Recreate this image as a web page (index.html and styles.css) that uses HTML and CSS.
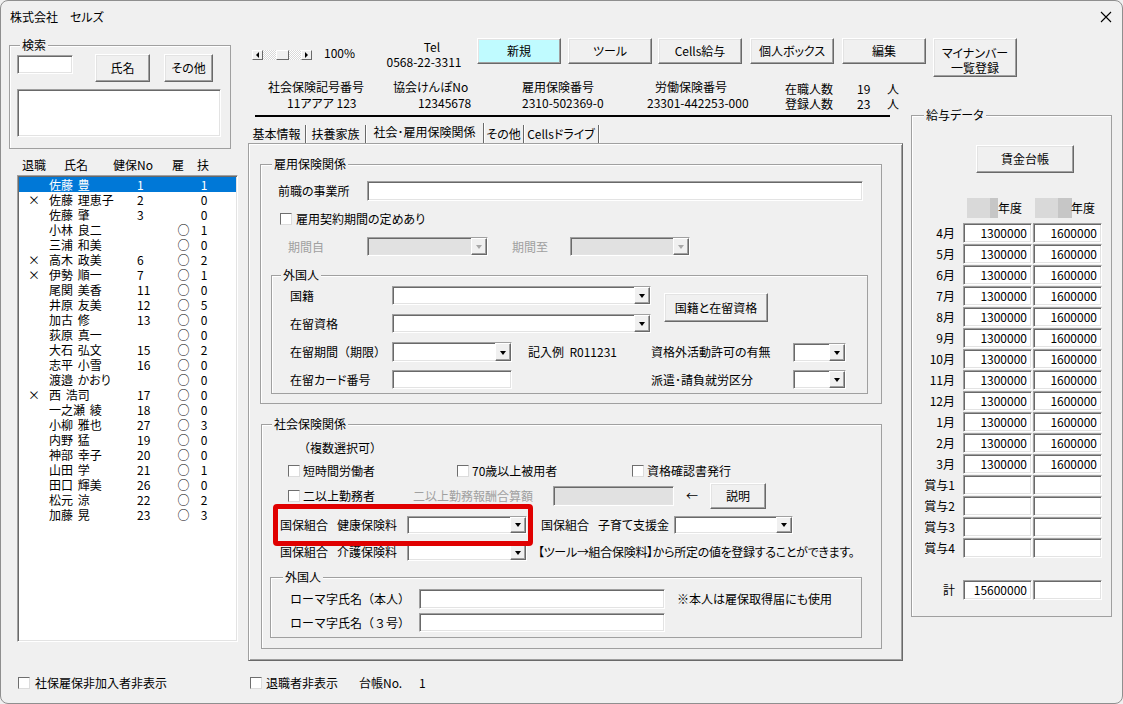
FILE: index.html
```html
<!DOCTYPE html>
<html lang="ja">
<head>
<meta charset="utf-8">
<title>株式会社　セルズ</title>
<link rel="stylesheet" href="styles.css">
</head>
<body>
<div class="window">
  <div class="titlebar">
    <span class="title">株式会社　セルズ</span>
    <svg class="close" width="12" height="12" viewBox="0 0 12 12"><path d="M1 1L11 11M11 1L1 11" stroke="#000" stroke-width="1.1" fill="none"/></svg>
  </div>
  <div class="main">
    <div class="left">
      <div class="frame search">
        <span class="legend lg-search">検索</span>
        <div class="search-row">
          <div class="field search-input"></div>
          <div class="btn btn-name">氏名</div>
          <div class="btn btn-other">その他</div>
        </div>
        <div class="field search-result"></div>
      </div>
      <div class="list-head">
        <span class="lh1">退職</span><span class="lh2">氏名</span><span class="lh3">健保No</span><span class="lh4">雇</span><span class="lh5">扶</span>
      </div>
      <div class="field listbox">
        <div class="lrow sel"><span class="c"></span><span>佐藤 豊</span><span>1</span><span class="c"></span><span class="c">1</span></div>
        <div class="lrow"><span class="c">×</span><span>佐藤 理恵子</span><span>2</span><span class="c"></span><span class="c">0</span></div>
        <div class="lrow"><span class="c"></span><span>佐藤 肇</span><span>3</span><span class="c"></span><span class="c">0</span></div>
        <div class="lrow"><span class="c"></span><span>小林 良二</span><span></span><span class="c">○</span><span class="c">1</span></div>
        <div class="lrow"><span class="c"></span><span>三浦 和美</span><span></span><span class="c">○</span><span class="c">0</span></div>
        <div class="lrow"><span class="c">×</span><span>高木 政美</span><span>6</span><span class="c">○</span><span class="c">2</span></div>
        <div class="lrow"><span class="c">×</span><span>伊勢 順一</span><span>7</span><span class="c">○</span><span class="c">1</span></div>
        <div class="lrow"><span class="c"></span><span>尾関 美香</span><span>11</span><span class="c">○</span><span class="c">0</span></div>
        <div class="lrow"><span class="c"></span><span>井原 友美</span><span>12</span><span class="c">○</span><span class="c">5</span></div>
        <div class="lrow"><span class="c"></span><span>加古 修</span><span>13</span><span class="c">○</span><span class="c">0</span></div>
        <div class="lrow"><span class="c"></span><span>荻原 真一</span><span></span><span class="c">○</span><span class="c">0</span></div>
        <div class="lrow"><span class="c"></span><span>大石 弘文</span><span>15</span><span class="c">○</span><span class="c">2</span></div>
        <div class="lrow"><span class="c"></span><span>志平 小雪</span><span>16</span><span class="c">○</span><span class="c">0</span></div>
        <div class="lrow"><span class="c"></span><span>渡邉 かおり</span><span></span><span class="c">○</span><span class="c">0</span></div>
        <div class="lrow"><span class="c">×</span><span>西 浩司</span><span>17</span><span class="c">○</span><span class="c">0</span></div>
        <div class="lrow"><span class="c"></span><span>一之瀬 綾</span><span>18</span><span class="c">○</span><span class="c">0</span></div>
        <div class="lrow"><span class="c"></span><span>小柳 雅也</span><span>27</span><span class="c">○</span><span class="c">3</span></div>
        <div class="lrow"><span class="c"></span><span>内野 猛</span><span>19</span><span class="c">○</span><span class="c">0</span></div>
        <div class="lrow"><span class="c"></span><span>神部 幸子</span><span>20</span><span class="c">○</span><span class="c">0</span></div>
        <div class="lrow"><span class="c"></span><span>山田 学</span><span>21</span><span class="c">○</span><span class="c">1</span></div>
        <div class="lrow"><span class="c"></span><span>田口 輝美</span><span>26</span><span class="c">○</span><span class="c">0</span></div>
        <div class="lrow"><span class="c"></span><span>松元 涼</span><span>22</span><span class="c">○</span><span class="c">2</span></div>
        <div class="lrow"><span class="c"></span><span>加藤 晃</span><span>23</span><span class="c">○</span><span class="c">3</span></div>
      </div>
      <div class="left-chk"><span class="chk"></span><span class="chk-lab">社保雇保非加入者非表示</span></div>
    </div>

    <div class="right-area">
      <div class="toolbar">
        <div class="hscroll">
          <div class="sb-btn"><span class="tri-l"></span></div>
          <div class="sb-track"><div class="sb-thumb"></div></div>
          <div class="sb-btn"><span class="tri-r"></span></div>
        </div>
        <div class="pct">100%</div>
        <div class="tel"><div class="tel-label">Tel</div><div>0568-22-3311</div></div>
        <div class="btn tb-btn b-new">新規</div>
        <div class="btn tb-btn b-tool">ツール</div>
        <div class="btn tb-btn b-cells">Cells給与</div>
        <div class="btn tb-btn b-box">個人ボックス</div>
        <div class="btn tb-btn b-edit">編集</div>
        <div class="btn tb-btn b-my"><span>マイナンバー<br>一覧登録</span></div>
      </div>

      <div class="lower">
        <div class="center">
          <div class="info">
            <div class="ig ig1"><span class="l">社会保険記号番号</span><span class="v">11アアア 123</span></div>
            <div class="ig ig2"><span class="l">協会けんぽNo</span><span class="v">12345678</span></div>
            <div class="ig ig3"><span class="l">雇用保険番号</span><span class="v">2310-502369-0</span></div>
            <div class="ig ig4"><span class="l">労働保険番号</span><span class="v">23301-442253-000</span></div>
            <div class="counts">
              <div class="cnt-row"><span class="cnt-l">在職人数</span><span class="cnt-n">19</span><span>人</span></div>
              <div class="cnt-row"><span class="cnt-l">登録人数</span><span class="cnt-n">23</span><span>人</span></div>
            </div>
          </div>

          <div class="tabs">
            <div class="tab t1">基本情報</div>
            <div class="tab t2">扶養家族</div>
            <div class="tab t3 active">社会･雇用保険関係</div>
            <div class="tab t4">その他</div>
            <div class="tab t5">Cellsドライブ</div>
          </div>

          <div class="tabpage">
            <div class="frame f-koyo">
              <span class="legend lg-koyo">雇用保険関係</span>
              <div class="r-zen">
                <span class="lab-zen">前職の事業所</span>
                <div class="field in-zen"></div>
              </div>
              <div class="r-chk"><span class="chk"></span><span class="chk-lab">雇用契約期間の定めあり</span></div>
              <div class="r-kikan">
                <span class="lab-k1 gray">期間自</span>
                <div class="field combo dis cb-k1"><span class="dd"></span></div>
                <span class="lab-k2 gray">期間至</span>
                <div class="field combo dis cb-k2"><span class="dd"></span></div>
              </div>

              <div class="frame f-gai1">
                <span class="legend lg-gai1">外国人</span>
                <div class="g-top">
                  <div class="g-top-left">
                    <div class="g-row g-rowA"><span class="g-lab">国籍</span><div class="field combo cb-wide"><span class="dd"></span></div></div>
                    <div class="g-row g-rowB"><span class="g-lab">在留資格</span><div class="field combo cb-wide"><span class="dd"></span></div></div>
                  </div>
                  <div class="btn btn-kokuseki">国籍と在留資格</div>
                </div>
                <div class="g-row g-rowC">
                  <span class="g-lab nopalt">在留期間（期限）</span>
                  <div class="field combo cb-120"><span class="dd"></span></div>
                  <span class="kinyu">記入例&nbsp;&nbsp;R011231</span>
                  <span class="g-lab2">資格外活動許可の有無</span>
                  <div class="field combo cb-53"><span class="dd"></span></div>
                </div>
                <div class="g-row g-rowD">
                  <span class="g-lab">在留カード番号</span>
                  <div class="field in-card"></div>
                  <span class="g-spacer"></span>
                  <span class="g-lab2">派遣･請負就労区分</span>
                  <div class="field combo cb-53"><span class="dd"></span></div>
                </div>
              </div>
            </div>

            <div class="frame f-shakai">
              <span class="legend lg-shakai">社会保険関係</span>
              <div class="fukusu nopalt">（複数選択可）</div>
              <div class="s-line1">
                <div class="sg sg1"><span class="chk"></span><span class="chk-lab">短時間労働者</span></div>
                <div class="sg sg2"><span class="chk"></span><span class="chk-lab">70歳以上被用者</span></div>
                <div class="sg"><span class="chk"></span><span class="chk-lab">資格確認書発行</span></div>
              </div>
              <div class="s-line2">
                <div class="sg sg2a"><span class="chk"></span><span class="chk-lab">二以上勤務者</span></div>
                <span class="gray-lab gray">二以上勤務報酬合算額</span>
                <div class="field in-dis"></div>
                <span class="arrow">←</span>
                <div class="btn btn-setsu">説明</div>
              </div>
              <div class="k-row k-row1">
                <span class="k-lab">国保組合<span class="k-gap">健康保険料</span></span>
                <div class="field combo cb-k120"><span class="dd"></span></div>
                <span class="k-lab2">国保組合<span class="k-gap">子育て支援金</span></span>
                <div class="field combo cb-k119"><span class="dd"></span></div>
              </div>
              <div class="k-row k-row2">
                <span class="k-lab">国保組合<span class="k-gap">介護保険料</span></span>
                <div class="field combo cb-k120"><span class="dd"></span></div>
                <span class="k-note">【ツール→組合保険料】から所定の値を登録することができます。</span>
              </div>
              <div class="frame f-gai2">
                <span class="legend lg-gai2">外国人</span>
                <div class="rm-row rm-row1">
                  <span class="rm-lab nopalt">ローマ字氏名（本人）</span>
                  <div class="field in-rm"></div>
                  <span class="rm-note">※本人は雇保取得届にも使用</span>
                </div>
                <div class="rm-row rm-row2">
                  <span class="rm-lab nopalt">ローマ字氏名（３号）</span>
                  <div class="field in-rm in-rm2"></div>
                </div>
              </div>
              <div class="redbox"></div>
            </div>
          </div>

          <div class="bottom">
            <div class="b-chkgrp"><span class="chk"></span><span class="chk-lab">退職者非表示</span></div>
            <span class="b-daicho">台帳No.</span>
            <span>1</span>
          </div>
        </div>

        <div class="salary">
          <div class="frame f-kyuyo">
            <span class="legend lg-kyuyo">給与データ</span>
            <div class="btn btn-chingin">賃金台帳</div>
            <div class="yr-head">
              <div class="yh yh1"><span class="blk blk1"></span><span class="yt">年度</span></div>
              <div class="yh yh2"><span class="blk blk2"></span><span class="yt">年度</span></div>
            </div>
            <div class="sal-grid">
              <span class="sl">4月</span><div class="field sv">1300000</div><div class="field sv">1600000</div>
              <span class="sl">5月</span><div class="field sv">1300000</div><div class="field sv">1600000</div>
              <span class="sl">6月</span><div class="field sv">1300000</div><div class="field sv">1600000</div>
              <span class="sl">7月</span><div class="field sv">1300000</div><div class="field sv">1600000</div>
              <span class="sl">8月</span><div class="field sv">1300000</div><div class="field sv">1600000</div>
              <span class="sl">9月</span><div class="field sv">1300000</div><div class="field sv">1600000</div>
              <span class="sl">10月</span><div class="field sv">1300000</div><div class="field sv">1600000</div>
              <span class="sl">11月</span><div class="field sv">1300000</div><div class="field sv">1600000</div>
              <span class="sl">12月</span><div class="field sv">1300000</div><div class="field sv">1600000</div>
              <span class="sl">1月</span><div class="field sv">1300000</div><div class="field sv">1600000</div>
              <span class="sl">2月</span><div class="field sv">1300000</div><div class="field sv">1600000</div>
              <span class="sl">3月</span><div class="field sv">1300000</div><div class="field sv">1600000</div>
              <span class="sl">賞与1</span><div class="field sv"></div><div class="field sv"></div>
              <span class="sl">賞与2</span><div class="field sv"></div><div class="field sv"></div>
              <span class="sl">賞与3</span><div class="field sv"></div><div class="field sv"></div>
              <span class="sl">賞与4</span><div class="field sv"></div><div class="field sv"></div>
            </div>
            <div class="sal-grid sal-total">
              <span class="sl">計</span><div class="field sv">15600000</div><div class="field sv"></div>
            </div>
          </div>
        </div>
      </div>
    </div>
  </div>
</div>
</body>
</html>
```

FILE: styles.css
```css
* { box-sizing: border-box; }
html, body { margin: 0; padding: 0; }
body {
  background: #f0f0f0;
  font-family: "Noto Sans CJK JP", "Noto Sans", sans-serif;
  font-size: 12px;
  line-height: 14px;
  color: #000;
  font-feature-settings: "palt" 1;
}
.nopalt { font-feature-settings: normal; }
.window {
  width: 1123px;
  height: 704px;
  border: 1px solid #8f8f8f;
  border-radius: 8px;
  background: #f0f0f0;
  overflow: hidden;
  display: flex;
  flex-direction: column;
}
.titlebar {
  height: 31px;
  flex: none;
  display: flex;
  align-items: center;
  justify-content: space-between;
  padding: 0 10px 0 9px;
}
.main { display: flex; flex: 1; }

/* common controls */
.frame {
  position: relative;
  border: 1px solid #a0a0a0;
  box-shadow: inset 1px 1px 0 #fff;
  flex: none;
}
.legend {
  position: absolute;
  top: -8px;
  padding: 0 2px;
  background: #f0f0f0;
  line-height: 14px;
  white-space: nowrap;
}
.field {
  background: #fff;
  border: 1px solid;
  border-color: #a0a0a0 #fff #fff #a0a0a0;
  box-shadow: inset 1px 1px 0 #696969, inset -1px -1px 0 #e3e3e3;
  flex: none;
}
.btn {
  background: #f0f0f0;
  border: 1px solid;
  border-color: #fff #696969 #696969 #fff;
  box-shadow: inset -1px -1px 0 #a0a0a0, inset 1px 1px 0 #e3e3e3;
  display: flex;
  align-items: center;
  justify-content: center;
  text-align: center;
  flex: none;
  white-space: nowrap;
}
.combo { display: flex; justify-content: flex-end; }
.dd {
  width: 16px;
  height: 100%;
  background: #f0f0f0;
  border: 1px solid;
  border-color: #fff #696969 #696969 #fff;
  box-shadow: inset -1px -1px 0 #a0a0a0;
  display: flex;
  align-items: center;
  justify-content: center;
  padding-top: 1px;
}
.dd::after {
  content: "";
  width: 0;
  height: 0;
  border-left: 3.5px solid transparent;
  border-right: 3.5px solid transparent;
  border-top: 4px solid #000;
}
.combo.dis { background: #e1e1e1; }
.combo.dis .dd::after { border-top-color: #a8a8a8; }
.chk {
  width: 12px;
  height: 12px;
  flex: none;
  background: #fff;
  border: 1px solid;
  border-color: #6e6e6e #dcdcdc #dcdcdc #6e6e6e;
}
.chk-lab { margin-left: 4px; white-space: nowrap; }
.gray { color: #a0a0a0; }

/* left column */
.left {
  width: 244px;
  flex: none;
  padding-left: 8px;
  display: flex;
  flex-direction: column;
}
.search {
  margin-top: 13px;
  width: 222px;
  height: 104px;
  padding: 8px 0 0 7px;
}
.lg-search { left: 10px; }
.search-row { display: flex; align-items: flex-start; }
.search-input { width: 56px; height: 19px; margin-top: 1px; }
.btn-name { width: 55px; height: 28px; margin-left: 22px; }
.btn-other { width: 49px; height: 28px; margin-left: 14px; }
.search-result { width: 204px; height: 48px; margin-top: 7px; }

.list-head {
  display: flex;
  margin-top: 9px;
  padding-left: 13px;
  height: 14px;
  flex: none;
}
.lh1 { width: 42px; }
.lh2 { width: 49px; }
.lh3 { width: 59px; }
.lh4 { width: 25px; }
.listbox {
  margin: 3px 0 0 8px;
  width: 221px;
  height: 467px;
  padding: 1px 1px 0 1px;
  overflow: hidden;
}
.lrow {
  display: grid;
  grid-template-columns: 30px 88px 34px 25px 16px;
  height: 15px;
  line-height: 15px;
  white-space: nowrap;
  word-spacing: 2px;
}
.lrow.sel { background: #0078d7; color: #fff; }
.c { text-align: center; }
.left-chk {
  display: flex;
  align-items: center;
  margin: 35px 0 0 9px;
  height: 12px;
  flex: none;
}
.left-chk .chk-lab { margin-left: 5px; }

/* right area */
.right-area { flex: 1; display: flex; flex-direction: column; }
.toolbar { height: 48px; display: flex; align-items: flex-start; flex: none; }
.hscroll { margin: 18px 0 0 7px; width: 60px; height: 10px; display: flex; flex: none; }
.sb-btn {
  width: 11px;
  height: 10px;
  background: #f0f0f0;
  border: 1px solid;
  border-color: #fff #696969 #696969 #fff;
  display: flex;
  align-items: center;
  justify-content: center;
  flex: none;
}
.tri-l, .tri-r { width: 0; height: 0; border-top: 3px solid transparent; border-bottom: 3px solid transparent; }
.tri-l { border-right: 3px solid #000; }
.tri-r { border-left: 3px solid #000; }
.sb-track {
  flex: 1;
  display: flex;
  background: repeating-conic-gradient(#ffffff 0% 25%, #d8d8d8 0% 50%) 0 0 / 2px 2px;
}
.sb-thumb {
  width: 13px;
  height: 10px;
  margin-left: 13px;
  background: #f0f0f0;
  border: 1px solid;
  border-color: #fff #696969 #696969 #fff;
}
.pct { width: 60px; margin: 14px 0 0 12px; flex: none; }
.tel { width: 80px; margin-top: 7px; line-height: 15px; text-align: center; flex: none; }
.tel-label { padding-left: 16px; }
.tb-btn { margin-top: 6px; width: 84px; height: 26px; }
.b-new { margin-left: 13px; background: #c0fbff; }
.b-tool { margin-left: 7px; }
.b-cells { margin-left: 6px; }
.b-box { margin-left: 8px; }
.b-edit { margin-left: 8px; }
.b-my { margin-left: 7px; height: 39px; align-items: flex-start; padding-top: 6px; line-height: 15px; }

.lower { display: flex; flex: 1; }
.center { width: 660px; flex: none; display: flex; flex-direction: column; }

.info {
  margin: 0 15px 0 10px;
  height: 37px;
  border-bottom: 2px solid #000;
  display: flex;
  padding-left: 13px;
  flex: none;
  white-space: nowrap;
}
.ig { display: flex; flex-direction: column; flex: none; }
.ig .v { margin-top: 2px; }
.ig1 { width: 125px; }
.ig2 { width: 129px; }
.ig3 { width: 125px; }
.ig4 { width: 138px; }
.ig1 .v { padding-left: 19px; }
.ig2 .v { padding-left: 25px; }
.ig4 .l { padding-left: 8px; }
.counts { padding-top: 1px; line-height: 15px; }
.cnt-row { display: flex; }
.cnt-l { width: 72px; }
.cnt-n { width: 30px; }

.tabs {
  display: flex;
  align-items: flex-end;
  height: 26px;
  margin-left: 3px;
  flex: none;
}
.tab {
  height: 18px;
  line-height: 17px;
  text-align: center;
  border-right: 1px solid #696969;
  box-shadow: 1px 0 0 #fff;
  white-space: nowrap;
  flex: none;
}
.tab.active { height: 20px; line-height: 17px; }
.t1 { width: 58px; }
.t2 { width: 60px; }
.t3 { width: 118px; }
.t4 { width: 40px; }
.t5 { width: 75px; }

.tabpage {
  margin-left: 3px;
  width: 655px;
  height: 518px;
  flex: none;
  border: 1px solid;
  border-color: #a0a0a0 #696969 #696969 #a0a0a0;
  box-shadow: inset 1px 1px 0 #fff, inset -1px -1px 0 #a0a0a0;
}

/* 雇用保険関係 */
.f-koyo { margin: 20px 0 0 11px; width: 622px; height: 240px; }
.lg-koyo { left: 11px; }
.r-zen { display: flex; align-items: center; height: 20px; margin-top: 16px; }
.lab-zen { margin-left: 17px; width: 89px; flex: none; }
.in-zen { width: 496px; height: 20px; }
.r-chk { display: flex; align-items: center; height: 14px; margin: 11px 0 0 19px; }
.r-kikan { display: flex; align-items: center; height: 19px; margin-top: 11px; }
.lab-k1 { margin-left: 27px; width: 79px; flex: none; }
.cb-k1 { width: 121px; height: 19px; }
.lab-k2 { margin-left: 24px; width: 58px; flex: none; }
.cb-k2 { width: 120px; height: 19px; }

.f-gai1 { margin: 19px 0 0 10px; width: 597px; height: 119px; }
.lg-gai1 { left: 9px; }
.g-top { display: flex; align-items: flex-start; }
.g-row { display: flex; align-items: center; white-space: nowrap; }
.g-rowA { height: 19px; margin-top: 10px; }
.g-rowB { height: 19px; margin-top: 9px; }
.g-rowC { height: 20px; margin-top: 9px; }
.g-rowD { height: 19px; margin-top: 8px; }
.g-lab { margin-left: 18px; width: 102px; flex: none; }
.cb-wide { width: 259px; height: 19px; }
.btn-kokuseki { margin: 17px 0 0 13px; width: 104px; height: 29px; }
.cb-120 { width: 120px; height: 20px; }
.in-card { width: 120px; height: 19px; }
.kinyu { margin-left: 16px; width: 123px; flex: none; }
.g-spacer { width: 139px; flex: none; }
.g-lab2 { width: 142px; flex: none; }
.cb-53 { width: 53px; height: 19px; }

/* 社会保険関係 */
.f-shakai { margin: 20px 0 0 12px; width: 621px; height: 225px; }
.lg-shakai { left: 10px; }
.fukusu { margin: 16px 0 0 36px; }
.sg { display: flex; align-items: center; flex: none; }
.sg .chk-lab { margin-left: 3px; }
.s-line1 { display: flex; align-items: center; height: 14px; margin: 9px 0 0 26px; }
.sg1 { width: 169px; }
.sg2 { width: 175px; }
.s-line2 { display: flex; align-items: center; height: 26px; margin: 5px 0 0 26px; }
.sg2a { width: 125px; }
.gray-lab { width: 140px; flex: none; white-space: nowrap; }
.in-dis { width: 121px; height: 20px; background: #e1e1e1; }
.arrow { margin-left: 12px; width: 24px; flex: none; }
.btn-setsu { width: 56px; height: 26px; }
.k-row { display: flex; align-items: center; white-space: nowrap; }
.k-row1 { height: 19px; margin-top: 6px; }
.k-row2 { height: 18px; margin-top: 9px; }
.k-lab { margin-left: 18px; width: 127px; flex: none; }
.k-lab2 { margin-left: 14px; width: 133px; flex: none; }
.k-gap { margin-left: 9px; }
.cb-k120 { width: 120px; height: 18px; }
.cb-k119 { width: 119px; height: 18px; }
.k-note { margin-left: 11px; letter-spacing: -0.3px; }
.f-gai2 { margin: 16px 0 0 8px; width: 592px; height: 61px; }
.lg-gai2 { left: 12px; }
.rm-row { display: flex; align-items: center; white-space: nowrap; }
.rm-row1 { height: 20px; margin-top: 11px; }
.rm-row2 { height: 19px; margin-top: 4px; }
.rm-lab { margin-left: 19px; width: 129px; flex: none; }
.in-rm { width: 246px; height: 20px; }
.in-rm2 { height: 19px; }
.rm-note { margin-left: 12px; }
.redbox {
  position: absolute;
  left: 11px;
  top: 79px;
  width: 260px;
  height: 42px;
  border: 5px solid #e00000;
  border-radius: 4px;
}

/* bottom */
.bottom { display: flex; align-items: center; height: 14px; margin-top: 15px; flex: none; white-space: nowrap; }
.b-chkgrp { width: 114px; padding-left: 5px; display: flex; align-items: center; flex: none; }
.b-daicho { width: 60px; flex: none; }

/* salary */
.salary { width: 217px; flex: none; }
.f-kyuyo { margin: 35px 0 0 6px; width: 201px; height: 502px; }
.lg-kyuyo { left: 12px; }
.btn-chingin { margin: 29px 0 0 64px; width: 98px; height: 28px; }
.yr-head { display: flex; height: 20px; margin: 25px 0 0 50px; }
.yh { width: 70px; display: flex; align-items: center; flex: none; }
.blk { height: 20px; flex: none; }
.blk1 { margin-left: 5px; width: 31px; background: linear-gradient(to right, #d9d9d9 23px, #c6c6c6 23px); }
.blk2 { margin-left: 3px; width: 37px; background: linear-gradient(to right, #d9d9d9 23px, #c6c6c6 23px); }
.yh2 .yt { margin-left: -1px; }
.sal-grid {
  display: grid;
  grid-template-columns: 50px 69px 69px;
  column-gap: 1px;
  row-gap: 1px;
  grid-auto-rows: 20px;
  margin-top: 5px;
}
.sal-total { margin-top: 22px; }
.sl { text-align: right; padding-right: 7px; line-height: 20px; white-space: nowrap; }
.sv { text-align: right; padding-right: 4px; line-height: 18px; }
```
